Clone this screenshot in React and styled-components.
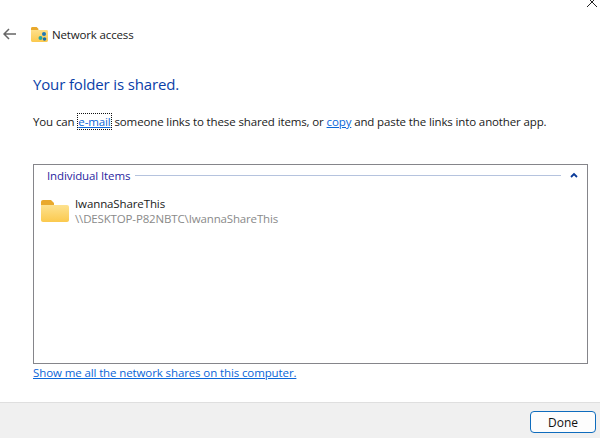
import React from "react";
import styled, { createGlobalStyle } from "styled-components";

const GlobalStyle = createGlobalStyle`
    html, body {
        margin: 0;
        padding: 0;
        background: #fff;
    }
    body {
        font-family: "Open Sans", "Noto Sans", sans-serif;
        font-size: 11.5px;
        letter-spacing: -0.11px;
        color: #1a1a1a;
    }
`;

const App = () => {
    return (
        <>
            <GlobalStyle />
            <Dialog>
                <CloseButton>
                    <svg width="12" height="12" viewBox="0 0 12 12">
                        <path d="M1 1l10 10M11 1L1 11" stroke="#222" strokeWidth="1" fill="none" />
                    </svg>
                </CloseButton>
                <Header>
                    <BackButton>
                        <svg width="13" height="12" viewBox="0 0 13 12">
                            <path d="M6 1L1 6l5 5M1 6h12" stroke="#666" strokeWidth="1.5" fill="none" />
                        </svg>
                    </BackButton>
                    <svg width="17" height="15" viewBox="0 0 17 15">
                        <defs>
                            <linearGradient id="smallFolder" x1="0" y1="0" x2="0" y2="1">
                                <stop offset="0" stopColor="#fde08a" />
                                <stop offset="1" stopColor="#fbc94e" />
                            </linearGradient>
                        </defs>
                        <path d="M0 1.500C0 .7.6 0 1.400 0h4.200l1.800 1.800v1.400H0z" fill="#e9a92c" />
                        <path d="M0 3h15.600c.8 0 1.400.6 1.400 1.400v9.200c0 .8-.6 1.400-1.400 1.400H1.400C.6 15 0 14.400 0 13.600z" fill="url(#smallFolder)" />
                        <circle cx="13" cy="7" r="2" fill="#1f78b4" />
                        <circle cx="9.500" cy="11" r="2" fill="#28a6a0" />
                        <circle cx="13.500" cy="12" r="1.800" fill="#176fa8" />
                    </svg>
                    <Title>Network access</Title>
                </Header>
                <Content>
                    <Heading>Your folder is shared.</Heading>
                    <Message>
                        You can <FocusedLink>e-mail</FocusedLink> someone links to these shared items, or <TextLink>copy</TextLink> and paste the links into another app.
                    </Message>
                    <ItemsBox>
                        <GroupHeader>
                            <GroupLabel>Individual Items</GroupLabel>
                            <GroupRule />
                            <svg width="8" height="6" viewBox="0 0 8 6">
                                <path d="M1 5l3-3 3 3" stroke="#0a3a99" strokeWidth="1.8" fill="none" />
                            </svg>
                        </GroupHeader>
                        <Item>
                            <svg width="28" height="22" viewBox="0 0 28 22">
                                <defs>
                                    <linearGradient id="bigFolder" x1="0" y1="0" x2="0" y2="1">
                                        <stop offset="0" stopColor="#fde28f" />
                                        <stop offset="1" stopColor="#fbc94e" />
                                    </linearGradient>
                                </defs>
                                <path d="M0 2C0 .9.9 0 2 0h8l3 3v3H0z" fill="#e9a92c" />
                                <path d="M0 5h26c1.100 0 2 .9 2 2v13c0 1.100-.9 2-2 2H2c-1.100 0-2-.9-2-2z" fill="url(#bigFolder)" />
                            </svg>
                            <ItemText>
                                <ItemName>IwannaShareThis</ItemName>
                                <ItemPath>\\DESKTOP-P82NBTC\IwannaShareThis</ItemPath>
                            </ItemText>
                        </Item>
                    </ItemsBox>
                    <TextLink>Show me all the network shares on this computer.</TextLink>
                </Content>
                <Footer>
                    <DoneButton>Done</DoneButton>
                </Footer>
            </Dialog>
        </>
    );
};

export default App;

const Dialog = styled.div`
    position: relative;
    height: 438px;
    width: 600px;
    overflow: hidden;
    display: flex;
    flex-direction: column;
    background: #fff;
`;

const CloseButton = styled.div`
    position: absolute;
    top: -4px;
    right: 2px;
`;

const Header = styled.div`
    display: flex;
    align-items: center;
    height: 20px;
    margin-top: 24px;
    padding-left: 3px;
`;

const BackButton = styled.div`
    display: flex;
    width: 28px;
`;

const Title = styled.span`
    margin-left: 4px;
    letter-spacing: -0.15px;
`;

const Content = styled.div`
    flex: 1;
    display: flex;
    flex-direction: column;
    align-items: flex-start;
    padding: 0 12px 0 33px;
`;

const Heading = styled.h1`
    margin: 29px 0 0;
    font-size: 15px;
    line-height: 22px;
    font-weight: 400;
    letter-spacing: -0.15px;
    color: #0a3ea8;
`;

const Message = styled.p`
    margin: 19px 0 0;
    line-height: 16px;
    white-space: nowrap;
    letter-spacing: -0.125px;
`;

const TextLink = styled.a`
    color: #0a66d8;
    text-decoration: underline;
    line-height: 16px;
`;

const FocusedLink = styled(TextLink)`
    margin: 0 1px;
    outline: 1px dotted #111;
`;

const ItemsBox = styled.div`
    box-sizing: border-box;
    width: 555px;
    height: 200px;
    margin-top: 34px;
    margin-bottom: 1px;
    padding: 2px 9px 0 13px;
    border: 1px solid #85858a;
`;

const GroupHeader = styled.div`
    display: flex;
    align-items: center;
    height: 16px;
`;

const GroupLabel = styled.span`
    color: #2a1fa0;
`;

const GroupRule = styled.div`
    flex: 1;
    height: 1px;
    margin: 0 9px 0 5px;
    background: #b5c3de;
`;

const Item = styled.div`
    display: flex;
    align-items: center;
    gap: 6px;
    margin: 13px 0 0 -6px;
`;

const ItemText = styled.div`
    display: flex;
    flex-direction: column;
`;

const ItemName = styled.span`
    line-height: 15px;
`;

const ItemPath = styled(ItemName)`
    color: #8a8a8a;
    letter-spacing: -0.15px;
`;

const Footer = styled.div`
    box-sizing: border-box;
    height: 36px;
    display: flex;
    align-items: center;
    justify-content: flex-end;
    padding: 3px 4px 0 0;
    background: #f0f0f0;
    border-top: 1px solid #dfdfdf;
`;

const DoneButton = styled.button`
    box-sizing: border-box;
    width: 66px;
    height: 22px;
    padding: 0;
    font-family: inherit;
    font-size: 12px;
    color: #111;
    background: #fdfdfd;
    border: 1.5px solid #0f6cbd;
    border-radius: 4px;
`;
